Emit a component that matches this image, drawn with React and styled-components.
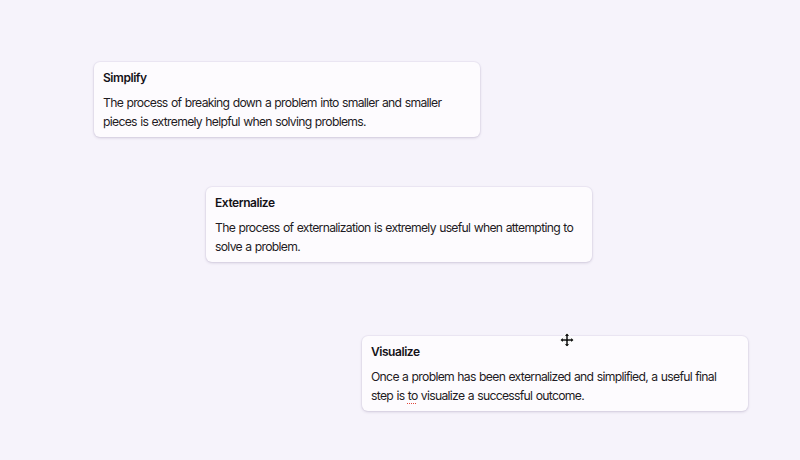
import React from "react";
import styled, { createGlobalStyle } from "styled-components";

const Global = createGlobalStyle`
  html, body { margin: 0; padding: 0; background: #f6f3fb; }
  body { font-family: Inter, "Noto Sans", sans-serif; -webkit-font-smoothing: antialiased; }
`;

const Canvas = styled.div`
  position: relative;
  width: 800px;
  height: 460px;
  overflow: hidden;
  background: #f6f3fb;
`;

const Card = styled.div`
  position: absolute;
  left: ${(p) => p.$x}px;
  top: ${(p) => p.$y}px;
  width: 386px;
  box-sizing: border-box;
  padding: 8px 9px 6px;
  background: #fdfbfe;
  border-radius: 6px;
  box-shadow: 0 1px 3px rgba(60, 40, 90, 0.18), 0 0 0 1px rgba(120, 100, 150, 0.05);
  display: flex;
  flex-direction: column;
  gap: 7px;
`;

const Title = styled.div`
  font-size: 12px;
  line-height: 16px;
  font-weight: 600;
  letter-spacing: -0.45px;
  color: #141218;
`;

const Body = styled.div`
  font-size: 12.2px;
  line-height: 19px;
  letter-spacing: -0.7px;
  word-spacing: 0.6px;
  color: #1f1c24;
`;

const Misspelled = styled.span`
  text-decoration: underline dotted #e0483c;
  text-decoration-thickness: 1px;
  text-underline-offset: 3px;
`;

const Cursor = styled.svg`
  position: absolute;
  left: ${(p) => p.$x}px;
  top: ${(p) => p.$y}px;
  pointer-events: none;
`;

const cards = [
  {
    x: 94,
    y: 62,
    title: "Simplify",
    body: "The process of breaking down a problem into smaller and smaller pieces is extremely helpful when solving problems.",
  },
  {
    x: 206,
    y: 187,
    title: "Externalize",
    body: "The process of externalization is extremely useful when attempting to solve a problem.",
  },
  {
    x: 362,
    y: 336,
    title: "Visualize",
    body: (
      <>
        Once a problem has been externalized and simplified, a useful final step is <Misspelled>to</Misspelled> visualize a successful outcome.
      </>
    ),
  },
];

export default function App() {
  return (
    <>
      <Global />
      <Canvas>
        {cards.map((c) => (
          <Card key={c.title} $x={c.x} $y={c.y}>
            <Title>{c.title}</Title>
            <Body>{c.body}</Body>
          </Card>
        ))}
        <Cursor $x={559} $y={332} width="16" height="16" viewBox="0 0 16 16">
          <path
            d="M8 0.7 L11.3 4.2 H9.3 V6.7 H11.8 V4.7 L15.3 8 L11.8 11.3 V9.3 H9.3 V11.8 H11.3 L8 15.3 L4.7 11.8 H6.7 V9.3 H4.2 V11.3 L0.7 8 L4.2 4.7 V6.7 H6.7 V4.2 H4.7 Z"
            fill="#111"
            stroke="#fff"
            strokeWidth="1.1"
            strokeLinejoin="round"
          />
        </Cursor>
      </Canvas>
    </>
  );
}
